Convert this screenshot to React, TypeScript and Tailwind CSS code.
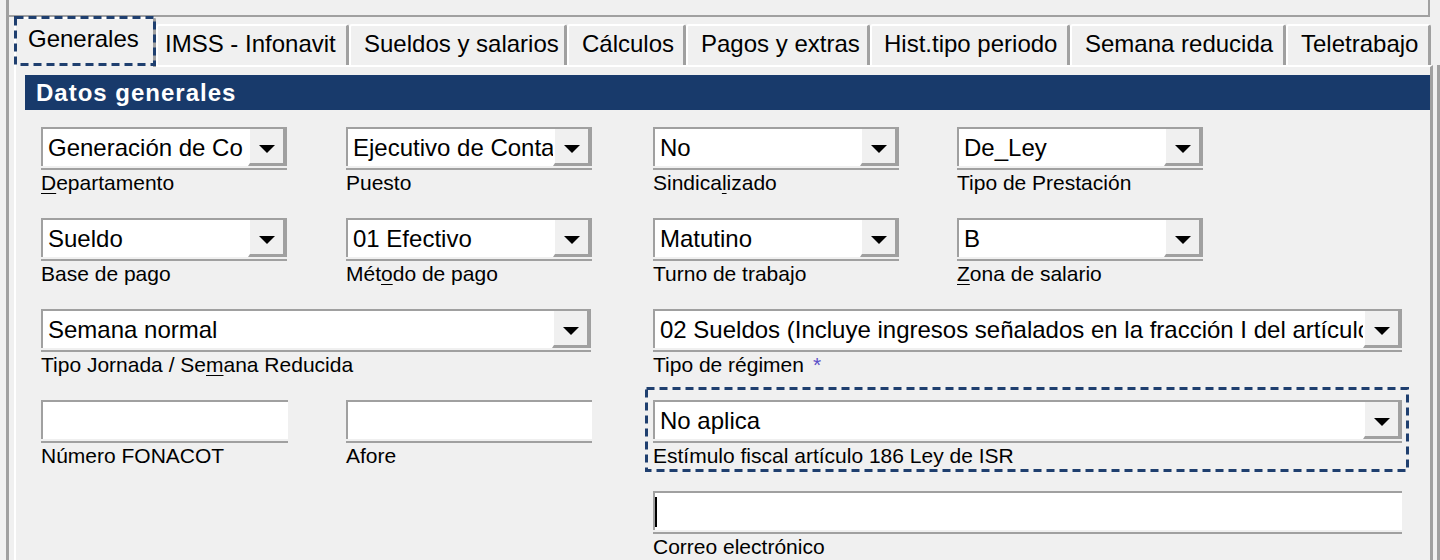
import React from "react";

type Tab = { label: string; w?: number; pl: number; selected?: boolean };

const tabs: Tab[] = [
  { label: "Generales", pl: 12, selected: true },
  { label: "IMSS - Infonavit", w: 193, pl: 7 },
  { label: "Sueldos y salarios", w: 218, pl: 13 },
  { label: "Cálculos", w: 119, pl: 13 },
  { label: "Pagos y extras", w: 184, pl: 13 },
  { label: "Hist.tipo periodo", w: 200, pl: 12 },
  { label: "Semana reducida", w: 216, pl: 13 },
  { label: "Teletrabajo", w: 145, pl: 13 },
];

function Arrow() {
  return (
    <svg width="16" height="8" viewBox="0 0 16 8" className="block">
      <polygon points="0,0 16,0 8,8" fill="#000" />
    </svg>
  );
}

function Box({ value, button = true, caret = false }: { value?: string; button?: boolean; caret?: boolean }) {
  return (
    <div className="h-[39px] flex border-t-2 border-l-2 border-[#a0a0a0] bg-white">
      <div className="flex-1 min-w-0 overflow-hidden whitespace-nowrap pl-[5px] text-[24px] leading-[37px] text-black relative">
        {caret && <div className="absolute left-0 top-[4px] w-[2px] h-[30px] bg-black" />}
        {value}
      </div>
      {button && (
        <div className="w-[39px] shrink-0 bg-[#f0f0f0] border-l-2 border-l-white border-r-[4px] border-r-[#a0a0a0] border-b-[3px] border-b-[#a0a0a0] flex items-center justify-center pt-[5px]">
          <Arrow />
        </div>
      )}
    </div>
  );
}

function Field({
  value,
  label,
  button = true,
  caret = false,
  className = "",
  children,
}: {
  value?: string;
  label: React.ReactNode;
  button?: boolean;
  caret?: boolean;
  className?: string;
  children?: React.ReactNode;
}) {
  return (
    <div className={"relative " + className}>
      <Box value={value} button={button} caret={caret} />
      <div className="mt-[2px] h-[2px] bg-[#a0a0a0]" />
      <div className="mt-[1px] text-[21px] leading-[24px] text-black whitespace-nowrap">{label}</div>
      {children}
    </div>
  );
}

const U = ({ children }: { children: React.ReactNode }) => (
  <span className="underline decoration-1 underline-offset-[3px]">{children}</span>
);

export default function App() {
  return (
    <div className="w-[1440px] h-[560px] bg-[#f0f0f0] overflow-hidden font-['Liberation_Sans',Arial,sans-serif]">
      <div className="ml-[6px] h-full border-l-[3px] border-[#a0a0a0] flex flex-col">
        {/* top strip */}
        <div className="h-[17px] w-[1421px] shrink-0 border-b-2 border-r-2 border-[#a0a0a0]" />

        {/* tabs */}
        <div className="h-[48px] shrink-0 flex items-end ml-[5px] relative z-10">
          {tabs.map((t) =>
            t.selected ? (
              <div
                key={t.label}
                className="relative w-[142px] h-[50px] mb-[-2px] bg-[#f0f0f0] border-t-2 border-l-2 border-white border-r-[3px] border-r-[#a0a0a0] rounded-t-[3px] text-[24px] leading-[28px] text-black whitespace-nowrap"
                style={{ paddingLeft: t.pl, paddingTop: 6 }}
              >
                {t.label}
                <svg className="absolute left-[-2px] top-[-3px] w-[142px] h-[50px] pointer-events-none" viewBox="0 0 142 50">
                  <rect x="1.5" y="1.5" width="139" height="47" fill="none" stroke="#1f3f6f" strokeWidth="3" strokeDasharray="8 5" />
                </svg>
              </div>
            ) : (
              <div
                key={t.label}
                className="h-[41px] bg-[#f0f0f0] border-t-2 border-l-2 border-white border-r-[3px] border-r-[#a0a0a0] rounded-t-[3px] text-[24px] leading-[28px] text-black whitespace-nowrap overflow-hidden"
                style={{ width: t.w, paddingLeft: t.pl, paddingTop: 4 }}
              >
                {t.label}
              </div>
            )
          )}
        </div>

        {/* body */}
        <div className="flex-1 flex">
          <div className="ml-[5px] w-[1419px] border-t-2 border-l-2 border-white border-r-[3px] border-r-[#a0a0a0]">
            <div className="mt-[8px] ml-[9px] h-[35px] bg-[#183a6b] pl-[11px] text-[24px] leading-[35px] font-bold tracking-[1px] text-white">
              Datos generales
            </div>

            <div className="mt-[17px] pl-[25px] grid grid-cols-[305px_307px_304px_1fr] gap-y-[23px]">
              {/* row 1 */}
              <Field className="w-[246px]" value="Generación de Co" label={<><U>D</U>epartamento</>} />
              <Field className="w-[246px]" value="Ejecutivo de Contabilidad" label="Puesto" />
              <Field className="w-[246px]" value="No" label={<>Sindica<U>l</U>izado</>} />
              <Field className="w-[246px]" value="De_Ley" label="Tipo de Prestación" />

              {/* row 2 */}
              <Field className="w-[246px]" value="Sueldo" label="Base de pago" />
              <Field className="w-[246px]" value="01 Efectivo" label={<>Mét<U>o</U>do de pago</>} />
              <Field className="w-[246px]" value="Matutino" label="Turno de trabajo" />
              <Field className="w-[246px]" value="B" label={<><U>Z</U>ona de salario</>} />

              {/* row 3 */}
              <Field className="col-span-2 w-[550px]" value="Semana normal" label={<>Tipo Jornada / Se<U>m</U>ana Reducida</>} />
              <Field
                className="col-span-2 w-[749px]"
                value="02 Sueldos (Incluye ingresos señalados en la fracción I del artículo 94 de LISR)"
                label={<>Tipo de régimen<span className="ml-[9px] text-[#5b4fc8]">*</span></>}
              />

              {/* row 4 */}
              <Field className="w-[247px]" button={false} label="Número FONACOT" />
              <Field className="w-[246px]" button={false} label="Afore" />
              <Field className="col-span-2 w-[749px]" value="No aplica" label="Estímulo fiscal artículo 186 Ley de ISR">
                <svg className="absolute left-[-8px] top-[-13px] w-[764px] h-[85px] pointer-events-none" viewBox="0 0 764 85">
                  <rect x="1.5" y="1.5" width="761" height="82" fill="none" stroke="#1f3f6f" strokeWidth="3" strokeDasharray="8 5" />
                </svg>
              </Field>

              {/* row 5 */}
              <Field className="col-start-3 col-span-2 w-[749px]" button={false} caret label="Correo electrónico" />
            </div>
          </div>
          <div className="w-[4px]" />
          <div className="w-[3px] bg-[#a0a0a0]" />
        </div>
      </div>
    </div>
  );
}
